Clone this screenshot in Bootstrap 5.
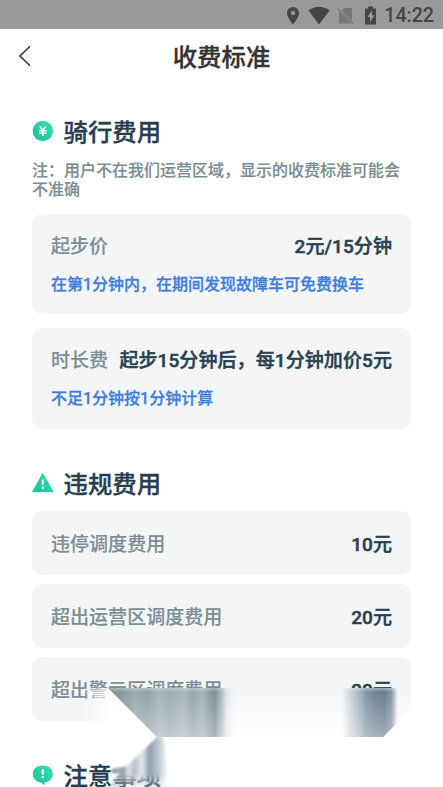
<!DOCTYPE html>
<html lang="zh-CN">
<head>
<meta charset="utf-8">
<meta name="viewport" content="width=device-width, initial-scale=1">
<title>收费标准</title>
<link href="https://cdn.jsdelivr.net/npm/bootstrap@5.3.0/dist/css/bootstrap.min.css" rel="stylesheet">
<style>
body{font-family:Roboto,"Noto Sans CJK SC",sans-serif;font-weight:500;color:#28404f;background:#fff;height:787px;overflow:hidden;-webkit-text-stroke:.15px currentColor}
.status{height:29px;background:#999;color:#454545;font-size:20px;padding-right:9px;line-height:29px;padding-top:1px;-webkit-text-stroke:0}
.status span{font-size:19.6px;line-height:32px;padding-top:2px}
.topbar{height:55px;color:#333;-webkit-text-stroke-width:.35px}
.topbar h1{font-size:24.4px;font-weight:500;line-height:57px}
.back{left:18px;top:16px}
.page{padding:0 32px}
.sec{height:36px;font-size:24.4px;line-height:36px;color:#263d50;font-weight:500;-webkit-text-stroke-width:.35px}
.sec svg{margin-right:9.500px}
.sec span{padding-top:3px}
.first{margin-top:29px}
.next{margin-top:36px}
.note{font-size:16px;line-height:18.5px;color:#7b8c93;padding-top:13px;height:65px}
.panel{background:#f4f5f7;border-radius:10px;padding:0 19px}
.fee{height:100px;padding-top:19px}
.fee+.fee{margin-top:14px;height:101px}
.line{font-size:19.050px;line-height:28px}
.label{color:#7b8e95}
.amount{font-weight:500;-webkit-text-stroke-width:.45px;letter-spacing:.06px}
.tip{font-size:16px;line-height:24px;margin-top:12px;color:#3e7fdc;-webkit-text-stroke-width:.3px}
.row-fee{height:64px;padding-top:3px}
.rates{gap:9px;margin-top:10px}
.smear{left:0;top:680px}
</style>
<script src="https://cdn.jsdelivr.net/npm/bootstrap@5.3.0/dist/js/bootstrap.bundle.min.js"></script>
</head>
<body class="position-relative">
<div class="status d-flex justify-content-end align-items-center">
<svg width="99" height="29" viewBox="284 0 99 29" fill="#454545">
<path fill-rule="evenodd" d="M292 6a6 6 0 0 0-6 6c0 4.500 6 11.500 6 11.500s6-7 6-11.500a6 6 0 0 0-6-6zm0 3.800a2.200 2.200 0 1 1 0 4.400a2.200 2.200 0 0 1 0-4.400z"/>
<path d="M307.500 9.500Q318 2 328.500 9.500L318 23.500z"/>
<path fill="#777" d="M343 7h8v13l-10.500-10.500zM338 10.500L350 22.500h-12z"/><path stroke="#777" stroke-width="1.500" d="M336.500 7.500l15.500 15.500"/>
<path fill-rule="evenodd" d="M367 5.500h5v2h3v16h-11v-16h3zM371 9.500l-4.500 6.500h2.500v5l4.500-6.700h-2.500z"/>
</svg><span>14:22</span></div>
<header class="topbar position-relative text-center">
<svg class="back position-absolute" width="14" height="22" fill="none" stroke="#333" stroke-width="1.600"><path d="M12 1.300L2 11l10 9.700"/></svg>
<h1 class="m-0">收费标准</h1></header>
<main class="page">
<h2 class="sec first d-flex align-items-center mb-0">
<svg width="22" height="24" viewBox="0 0 22 24"><defs><linearGradient id="g" x1="1" y1="0" x2="0" y2="1"><stop stop-color="#3bdcaf"/><stop offset="1" stop-color="#17c39a"/></linearGradient></defs><circle cx="10.800" cy="12" r="10.200" fill="url(#g)"/><path d="M7.700 7.300l3.100 4 3.100-4M7 11.700h7.600M7 14.300h7.600M10.800 11v6" fill="none" stroke="#fff" stroke-width="1.600"/></svg><span>骑行费用</span></h2>
<p class="note mb-0">注：用户不在我们运营区域，显示的收费标准可能会不准确</p>
<section class="panel fee"><div class="line d-flex justify-content-between"><span class="label">起步价</span><span class="amount">2元/15分钟</span></div><div class="tip text-nowrap">在第1分钟内，在期间发现故障车可免费换车</div></section>
<section class="panel fee"><div class="line d-flex justify-content-between text-nowrap"><span class="label">时长费</span><span class="amount">起步15分钟后，每1分钟加价5元</span></div><div class="tip">不足1分钟按1分钟计算</div></section>
<h2 class="sec next d-flex align-items-center mb-0">
<svg width="22" height="24" viewBox="0 0 22 24"><path d="M10.800 2.500L21 20.700H.6z" fill="url(#g)" stroke="url(#g)" stroke-width="1" stroke-linejoin="round"/><path d="M10.800 8.500V14M10.800 15.500V18" stroke="#fff" stroke-width="2"/></svg><span>违规费用</span></h2>
<div class="rates d-grid">
<div class="panel row-fee line d-flex justify-content-between align-items-center"><span class="label">违停调度费用</span><span class="amount">10元</span></div>
<div class="panel row-fee line d-flex justify-content-between align-items-center"><span class="label">超出运营区调度费用</span><span class="amount">20元</span></div>
<div class="panel row-fee line d-flex justify-content-between align-items-center"><span class="label">超出警示区调度费用</span><span class="amount">20元</span></div>
</div>
<h2 class="sec next d-flex align-items-center mb-0">
<svg width="22" height="24" viewBox="0 0 22 24"><path d="M10.800 2.500C4.500 2.500.8 6 .8 11c0 4.500 3.500 8 8.200 8.500l3.500 3v-3c5-.5 8.300-4 8.300-8.500 0-5-3.700-8.500-10-8.500z" fill="url(#g)"/><path d="M10.800 6.500v5M10.800 13v2" stroke="#fff" stroke-width="2.200"/></svg><span>注意事项</span></h2>
</main>
<svg class="smear position-absolute" width="443" height="107" viewBox="0 680 443 107">
<defs>
<linearGradient id="base" x1="0" y1="0" x2="0" y2="1"><stop stop-color="#f4f5f7"/><stop offset="1" stop-color="#fdfdfe"/></linearGradient>
<linearGradient id="left" gradientUnits="userSpaceOnUse" x1="108" y1="0" x2="234" y2="0">
<stop stop-color="#768991"/><stop offset=".14" stop-color="#8a9aa1"/><stop offset=".22" stop-color="#9aa8ae"/><stop offset=".31" stop-color="#8e9ea5"/><stop offset=".41" stop-color="#a4b2b7"/><stop offset=".49" stop-color="#98a7ad"/><stop offset=".59" stop-color="#a9b5ba"/><stop offset=".67" stop-color="#93a3aa"/><stop offset=".75" stop-color="#a1afb5"/><stop offset=".85" stop-color="#778a92"/><stop offset=".9" stop-color="#8c9ca3" stop-opacity=".7"/><stop offset=".94" stop-color="#91a0a7" stop-opacity=".2"/><stop offset="1" stop-color="#91a0a7" stop-opacity="0"/></linearGradient>
<linearGradient id="right" gradientUnits="userSpaceOnUse" x1="342" y1="0" x2="398" y2="0"><stop stop-color="#9baab5" stop-opacity="0"/><stop offset=".22" stop-color="#9baab5" stop-opacity=".65"/><stop offset=".42" stop-color="#8397a5"/><stop offset=".56" stop-color="#718596"/><stop offset=".76" stop-color="#667b8d"/><stop offset=".88" stop-color="#8392a0"/><stop offset="1" stop-color="#8c9ca8" stop-opacity="0"/></linearGradient>
<linearGradient id="fade" x1="0" y1="0" x2="0" y2="1"><stop stop-color="#fff" stop-opacity="0"/><stop offset="1" stop-color="#fff" stop-opacity=".38"/></linearGradient>
<linearGradient id="side" x1="0" y1="0" x2="1" y2="0"><stop stop-color="#fff" stop-opacity="0"/><stop offset=".45" stop-color="#fff"/></linearGradient>
<linearGradient id="top" gradientUnits="userSpaceOnUse" x1="0" y1="687" x2="0" y2="692"><stop stop-color="#fff" stop-opacity=".5"/><stop offset="1" stop-color="#fff"/></linearGradient>
<mask id="topmask" maskUnits="userSpaceOnUse" x="100" y="680" width="320" height="60"><path d="M100 680h320v60H100z" fill="url(#top)"/></mask>
<linearGradient id="streaks" gradientUnits="userSpaceOnUse" x1="110" y1="0" x2="168" y2="0"><stop stop-color="#6d7e8c"/><stop offset=".13" stop-color="#a2adb6"/><stop offset=".23" stop-color="#99a6b1"/><stop offset=".32" stop-color="#dde1e5"/><stop offset=".42" stop-color="#b8c1c8"/><stop offset=".55" stop-color="#e4e8eb"/><stop offset=".68" stop-color="#8f9eaa"/><stop offset=".78" stop-color="#aeb9c2"/><stop offset=".86" stop-color="#c5cdd3"/><stop offset="1" stop-color="#fff"/></linearGradient>
<linearGradient id="reveal" gradientUnits="userSpaceOnUse" x1="0" y1="774" x2="0" y2="787"><stop stop-color="#fff"/><stop offset="1" stop-color="#fff" stop-opacity=".3"/></linearGradient>
<mask id="lowmask" maskUnits="userSpaceOnUse" x="100" y="730" width="140" height="57"><path d="M100 730h140v57H100z" fill="url(#reveal)"/></mask>
<filter id="edge" x="-10%" y="-10%" width="120%" height="120%"><feGaussianBlur stdDeviation=".9"/></filter>
</defs>
<path d="M108 688h303v34H108z" fill="#fff"/>
<path d="M80 688h28l49 49-34 27H80z" fill="url(#side)"/>
<path d="M108 688h303v20l-28 29H157z" fill="url(#base)"/>
<g mask="url(#topmask)"><path d="M108 688h126v49h-77z" fill="url(#left)"/>
<path d="M342 688h56v34l-15 15h-41z" fill="url(#right)"/></g>
<path d="M108 688h303v20l-28 29H157z" fill="url(#fade)"/>
<g mask="url(#lowmask)"><path d="M113 758h60v29h-60z" fill="#fff"/><path d="M157 737l-30 29-15 3v4l7 1-9 13h59l-5-50z" fill="url(#streaks)" filter="url(#edge)"/></g>
</svg>
</body>
</html>
